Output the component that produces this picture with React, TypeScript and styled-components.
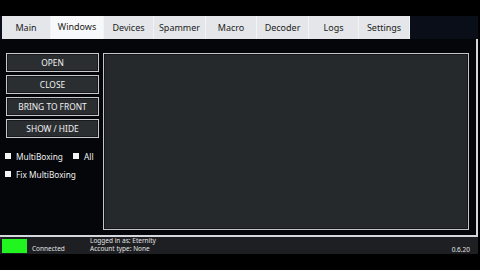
import React from "react";
import styled, { createGlobalStyle } from "styled-components";

const Global = createGlobalStyle`
  html, body { margin: 0; padding: 0; background: #000; }
  body { font-family: "Noto Sans", "DejaVu Sans", sans-serif; }
  * { box-sizing: border-box; }
`;

const Frame = styled.div`
  width: 480px;
  height: 270px;
  display: flex;
  flex-direction: column;
  background: #000;
  overflow: hidden;
`;

const TopSpace = styled.div`
  height: 16px;
  background: #000;
`;

const TabStrip = styled.div`
  height: 23px;
  width: 478px;
  display: flex;
  padding-left: 2px;
  background: #0a0e19;
`;

const Tab = styled.div<{ $w: number; $active?: boolean }>`
  width: ${(p) => p.$w}px;
  height: 23px;
  display: flex;
  align-items: center;
  justify-content: center;
  padding-bottom: ${(p) => (p.$active ? 3 : 1)}px;
  background: ${(p) => (p.$active ? "#f7f8f9" : "#e4e6e9")};
  border-right: 1px solid #f2f3f5;
  color: #1c1c1c;
  font-size: 9px;
`;

const Body = styled.div`
  width: 478px;
  height: 198px;
  display: flex;
  gap: 4px;
  padding: 14px 0 0 6px;
  background: #04060a;
  border-right: 2px solid #d4d7dc;
  border-bottom: 2px solid #d4d7dc;
`;

const LeftCol = styled.div`
  width: 93px;
  display: flex;
  flex-direction: column;
  gap: 3px;
`;

const Button = styled.div`
  height: 19px;
  display: flex;
  align-items: center;
  justify-content: center;
  background: #2b2e31;
  border: 1px solid #c6c8cb;
  box-shadow: inset 0 0 0 1px #17191b;
  color: #f2f2f2;
  font-size: 8.4px;
`;

const Checks = styled.div`
  margin-top: 9px;
  margin-left: -1px;
  display: flex;
  flex-direction: column;
  gap: 6px;
`;

const CheckRow = styled.div`
  height: 12px;
  display: flex;
  align-items: center;
  gap: 10px;
`;

const Check = styled.div`
  display: flex;
  align-items: center;
  gap: 5px;
  color: #f0f0f0;
  font-size: 8.3px;
`;

const Box = styled.span`
  width: 6px;
  height: 6px;
  background: #f4f4f4;
`;

const Panel = styled.div`
  width: 366px;
  height: 177px;
  background: #26292c;
  border: 1px solid #c3c6c9;
  box-shadow: inset 0 0 0 1px #131518;
`;

const Status = styled.div`
  height: 17px;
  width: 478px;
  display: flex;
  align-items: center;
  padding: 0 8px 0 2px;
  background: #1d1f22;
  color: #e2e2e2;
  font-size: 6.5px;
`;

const Led = styled.div`
  width: 25px;
  height: 14px;
  background: #20f520;
`;

const Conn = styled.div`
  margin-left: 5px;
  margin-top: 6px;
  width: 58px;
`;

const Lines = styled.div`
  display: flex;
  flex-direction: column;
  line-height: 8px;
  margin-top: -1px;
`;

const Version = styled.div`
  margin-left: auto;
  margin-top: 7px;
`;

const Bottom = styled.div`
  flex: 1;
  background: #000;
`;

const tabs: [string, number][] = [
  ["Main", 49],
  ["Windows", 53],
  ["Devices", 50],
  ["Spammer", 52],
  ["Macro", 51],
  ["Decoder", 52],
  ["Logs", 50],
  ["Settings", 51],
];

export default function App() {
  return (
    <Frame>
      <Global />
      <TopSpace />
      <TabStrip>
        {tabs.map(([t, w]) => (
          <Tab key={t} $w={w} $active={t === "Windows"}>
            {t}
          </Tab>
        ))}
      </TabStrip>
      <Body>
        <LeftCol>
          <Button>OPEN</Button>
          <Button>CLOSE</Button>
          <Button>BRING TO FRONT</Button>
          <Button>SHOW / HIDE</Button>
          <Checks>
            <CheckRow>
              <Check>
                <Box />
                MultiBoxing
              </Check>
              <Check>
                <Box />
                All
              </Check>
            </CheckRow>
            <CheckRow>
              <Check>
                <Box />
                Fix MultiBoxing
              </Check>
            </CheckRow>
          </Checks>
        </LeftCol>
        <Panel />
      </Body>
      <Status>
        <Led />
        <Conn>Connected</Conn>
        <Lines>
          <span>Logged in as: Eternity</span>
          <span>Account type: None</span>
        </Lines>
        <Version>0.6.20</Version>
      </Status>
      <Bottom />
    </Frame>
  );
}
